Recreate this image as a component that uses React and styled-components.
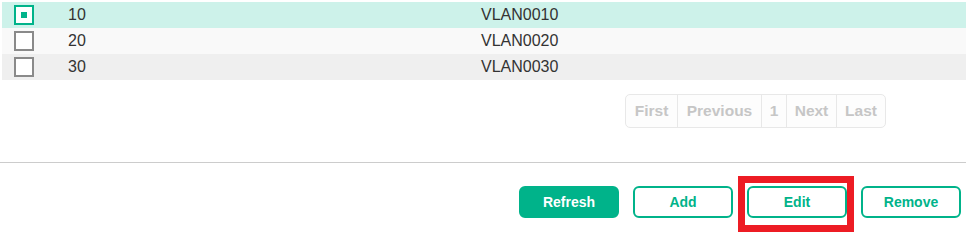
import React from "react";
import styled, { createGlobalStyle } from "styled-components";

const GREEN = "#00b38a";

const Global = createGlobalStyle`
  html, body { margin: 0; padding: 0; background: #fff; }
  body { font-family: "Liberation Sans", Arial, sans-serif; }
`;

const Page = styled.div`
  width: 966px;
  height: 232px;
  display: flex;
  flex-direction: column;
`;

const Table = styled.div`
  display: flex;
  flex-direction: column;
  padding: 2px 0 0 2px;
`;

const Row = styled.div`
  display: grid;
  grid-template-columns: 66px 413px 1fr;
  align-items: center;
  height: 26px;
  background: ${(p) => p.$bg};
  color: #333;
  font-size: 16px;
`;

const CheckCell = styled.div`
  display: flex;
  align-items: center;
  padding-left: 12px;
`;

const Check = styled.div`
  box-sizing: border-box;
  width: 20px;
  height: 20px;
  border: 2px solid ${(p) => (p.$checked ? GREEN : "#8a8a8a")};
  background: #fff;
  display: flex;
  align-items: center;
  justify-content: center;
  &::after {
    content: "";
    display: ${(p) => (p.$checked ? "block" : "none")};
    width: 6px;
    height: 6px;
    background: ${GREEN};
  }
`;

const Cell = styled.div`
  line-height: 26px;
`;

const PagerWrap = styled.div`
  display: flex;
  justify-content: flex-end;
  padding: 14px 80px 0 0;
`;

const Pager = styled.div`
  display: flex;
  height: 34px;
  box-sizing: border-box;
  border: 1px solid #e8e8e8;
  border-radius: 5px;
  background: #fdfdfd;
  overflow: hidden;
`;

const PageItem = styled.div`
  display: flex;
  align-items: center;
  justify-content: center;
  width: ${(p) => p.$w}px;
  box-sizing: border-box;
  font-size: 15.5px;
  font-weight: bold;
  color: #c6c6c6;
  & + & { border-left: 1px solid #e8e8e8; }
`;

const Divider = styled.div`
  height: 1px;
  background: #cccccc;
  margin-top: 34px;
`;

const Actions = styled.div`
  display: flex;
  justify-content: flex-end;
  align-items: flex-start;
  gap: 14px;
  padding: 23px 5px 14px 0;
`;

const Slot = styled.div`
  position: relative;
  display: flex;
`;

const Button = styled.button`
  box-sizing: border-box;
  width: 100px;
  height: 32px;
  border-radius: 6px;
  border: 2px solid ${GREEN};
  background: ${(p) => (p.$primary ? GREEN : "#fff")};
  color: ${(p) => (p.$primary ? "#fff" : GREEN)};
  font-family: "Liberation Sans", Arial, sans-serif;
  font-size: 14px;
  font-weight: bold;
  padding: 0;
  cursor: pointer;
`;

const Highlight = styled.span`
  position: absolute;
  left: -9px;
  top: -10px;
  width: 116px;
  height: 56px;
  box-sizing: border-box;
  border: 7px solid #ed1c24;
  pointer-events: none;
`;

const rows = [
  { id: "10", name: "VLAN0010", bg: "#cdf2ea", checked: true },
  { id: "20", name: "VLAN0020", bg: "#f9f9f9" },
  { id: "30", name: "VLAN0030", bg: "#efefef" },
];

const pages = [
  { label: "First", w: 51 },
  { label: "Previous", w: 84 },
  { label: "1", w: 25 },
  { label: "Next", w: 50 },
  { label: "Last", w: 49 },
];

export default function App() {
  return (
    <Page>
      <Global />
      <Table>
        {rows.map((r) => (
          <Row key={r.id} $bg={r.bg}>
            <CheckCell>
              <Check $checked={r.checked} />
            </CheckCell>
            <Cell>{r.id}</Cell>
            <Cell>{r.name}</Cell>
          </Row>
        ))}
      </Table>
      <PagerWrap>
        <Pager>
          {pages.map((p) => (
            <PageItem key={p.label} $w={p.w}>
              {p.label}
            </PageItem>
          ))}
        </Pager>
      </PagerWrap>
      <Divider />
      <Actions>
        <Slot>
          <Button $primary>Refresh</Button>
        </Slot>
        <Slot>
          <Button>Add</Button>
        </Slot>
        <Slot>
          <Button>Edit</Button>
          <Highlight />
        </Slot>
        <Slot>
          <Button>Remove</Button>
        </Slot>
      </Actions>
    </Page>
  );
}
